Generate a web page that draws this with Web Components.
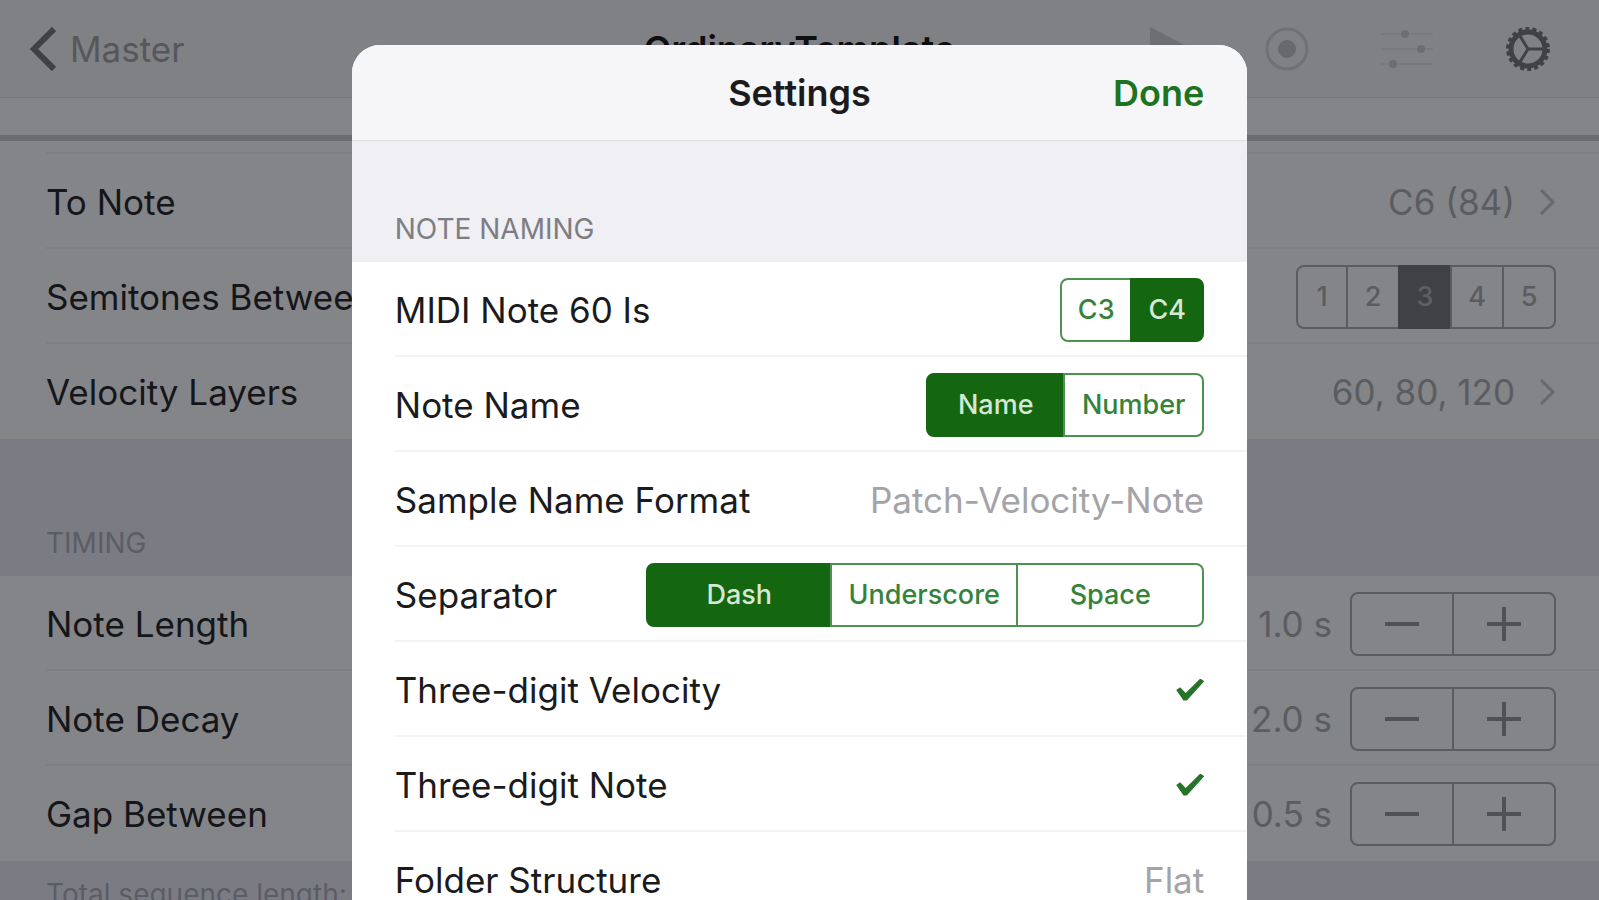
<!DOCTYPE html>
<html lang="en">
<head>
<meta charset="utf-8">
<meta name="viewport" content="width=device-width, initial-scale=1">
<title>Settings</title>
<style>
  :root {
    --tint: #146610;
    --cell: #ffffff;
    --group: #efeff4;
    --line: #f3f3f5;
    --text: #1b1b1d;
    --detail: #a3a3a8;
    --heading: #7d7d83;
    --gutter: 43px;
  }
  body {
    margin: 0;
    height: 100vh;
    overflow: hidden;
    background: #7b7b84;
    font-family: Inter, "Liberation Sans", sans-serif;
    font-size: 35px;
    line-height: 44px;
  }
  .dimmed {
    --tint: #404145;
    --cell: #848588;
    --group: #7b7b84;
    --line: #7e7f82;
    --text: #15161a;
    --detail: #5b5c60;
    --heading: #5c5d63;
    --gutter: 46px;
    --border: #5b5c60;
    --on-tint: #5f6064;
  }
</style>
</head>
<body>
  <main class="dimmed">
    <nav-header>OrdinaryTemplate</nav-header>
    <setting-group continued>
      <setting-row label="To Note" detail="C6 (84)" link></setting-row>
      <setting-row label="Semitones Between"><segmented-control name="semitones" options="1,2,3,4,5" value="3" size="52"></segmented-control></setting-row>
      <setting-row label="Velocity Layers" detail="60, 80, 120" link></setting-row>
    </setting-group>
    <setting-group heading="TIMING" footer="Total sequence length:">
      <setting-row label="Note Length"><value-stepper value="1.0" label="Note Length"></value-stepper></setting-row>
      <setting-row label="Note Decay"><value-stepper value="2.0" label="Note Decay"></value-stepper></setting-row>
      <setting-row label="Gap Between"><value-stepper value="0.5" label="Gap Between"></value-stepper></setting-row>
    </setting-group>
  </main>
  <settings-sheet heading="Settings">
    <setting-group heading="NOTE NAMING">
      <setting-row label="MIDI Note 60 Is"><segmented-control name="middle" options="C3,C4" value="C4" size="72"></segmented-control></setting-row>
      <setting-row label="Note Name"><segmented-control name="note" options="Name,Number" value="Name" size="139"></segmented-control></setting-row>
      <setting-row label="Sample Name Format" detail="Patch-Velocity-Note"></setting-row>
      <setting-row label="Separator"><segmented-control name="separator" options="Dash,Underscore,Space" value="Dash" size="186"></segmented-control></setting-row>
      <setting-row label="Three-digit Velocity" check></setting-row>
      <setting-row label="Three-digit Note" check></setting-row>
      <setting-row label="Folder Structure" detail="Flat"></setting-row>
    </setting-group>
  </settings-sheet>

<script>
class NavHeader extends HTMLElement {
  constructor() {
    super();
    this.attachShadow({ mode: "open" });
  }

  connectedCallback() {
    this.shadowRoot.innerHTML = `
      <style>
        :host {
          display: block;
          background: var(--cell);
          border-bottom: 6px solid #6b6c70;
          padding-bottom: 37px;
        }
        header {
          box-sizing: border-box;
          height: 98px;
          display: grid;
          grid-template-columns: 1fr auto 1fr;
          align-items: center;
          padding: 0 48px 0 30px;
          background: #808184;
          border-bottom: 1px solid #77787b;
        }
        header {
          padding-right: 48px;
          padding-left: 48px;
        }
        h1 {
          margin: 0;
          font-size: 36px;
          font-weight: 600;
          line-height: 44px;
          color: #0e0f12;
        }
        a {
          display: flex;
          align-items: center;
          gap: 14px;
          margin-left: -18px;
          color: #56575b;
          text-decoration: none;
        }
        nav {
          display: flex;
          justify-content: flex-end;
          gap: 72px;
        }
        button {
          display: flex;
          border: 0;
          padding: 0;
          background: none;
        }
        svg {
          display: block;
        }
      </style>
      <header>
        <a href="#master">
          <svg width="26" height="44" viewBox="0 0 26 44" fill="none" stroke="#404145" stroke-width="6"><path d="M24 2 4 22 24 42"/></svg>
          Master
        </a>
        <h1><slot></slot></h1>
        <nav>
          <button aria-label="Play">
            <svg width="44" height="44" viewBox="0 0 44 44"><path fill="#6d6e72" d="M1 0 43 22 1 44Z"/></svg>
          </button>
          <button aria-label="Record">
            <svg width="44" height="44" viewBox="0 0 44 44"><circle cx="22" cy="22" r="20" fill="none" stroke="#707175" stroke-width="3"/><circle cx="22" cy="22" r="9" fill="#68696d"/></svg>
          </button>
          <button aria-label="Mixer">
            <svg width="52" height="44" viewBox="0 0 52 44"><path stroke="#797a7d" stroke-width="2" d="M0 7H52M0 22H52M0 37H52"/><g fill="#6d6e72"><circle cx="24" cy="7" r="4"/><circle cx="40" cy="22" r="4"/><circle cx="12" cy="37" r="4"/></g></svg>
          </button>
          <button aria-label="Settings">
            <svg width="46" height="44" viewBox="-23 -22 46 44" fill="none" stroke="#404145">
              <circle r="20" stroke-width="4" stroke-dasharray="4 3"/>
              <circle r="17" stroke-width="5"/>
              <path stroke-width="3" d="M0 0H15M0 0-8-13M0 0-8 13"/>
            </svg>
          </button>
        </nav>
      </header>
    `;
  }
}

class SettingGroup extends HTMLElement {
  constructor() {
    super();
    this.attachShadow({ mode: "open" });
  }

  connectedCallback() {
    const heading = this.getAttribute("heading");
    const footer = this.getAttribute("footer");
    this.shadowRoot.innerHTML = `
      <style>
        :host {
          display: block;
          background: var(--group);
        }
        h2, p {
          margin: 0;
          font-size: 28px;
          font-weight: 400;
          line-height: 32px;
          color: var(--heading);
          padding: 0 var(--gutter);
        }
        h2 {
          padding-top: var(--group-gap, 88px);
          padding-bottom: 17px;
        }
        p {
          padding-top: 17px;
        }
        .rows {
          background: var(--cell);
        }
        /* the row above is scrolled under the header, only its rule shows */
        :host([continued]) .rows::before {
          content: "";
          display: block;
          height: 11px;
          margin-left: var(--gutter);
          border-bottom: 2px solid var(--line);
        }
      </style>
      ${heading ? `<h2>${heading}</h2>` : ""}
      <div class="rows"><slot></slot></div>
      ${footer ? `<p>${footer}</p>` : ""}
    `;
  }
}

class SettingRow extends HTMLElement {
  constructor() {
    super();
    this.attachShadow({ mode: "open" });
  }

  connectedCallback() {
    this.shadowRoot.innerHTML = `
      <style>
        :host {
          display: block;
          padding-left: var(--gutter);
        }
        .row {
          box-sizing: border-box;
          min-height: 95px;
          display: flex;
          align-items: center;
          justify-content: space-between;
          padding-top: 2px;
          padding-right: 43px;
          border-bottom: 2px solid var(--line);
          color: var(--text);
          white-space: nowrap;
        }
        :host(:last-child) .row {
          border-bottom-color: transparent;
        }
        .detail, a {
          display: flex;
          align-items: center;
          gap: 24px;
          color: var(--detail);
          text-decoration: none;
        }
        input {
          appearance: none;
          width: 28px;
          height: 22px;
          margin: 0;
        }
        input:checked {
          background: #247528;
          clip-path: polygon(0 52%, 14% 40%, 34% 66%, 86% 0, 100% 12%, 38% 100%, 26% 100%);
        }
      </style>
      ${this.content()}
    `;
  }

  content() {
    const label = this.getAttribute("label");
    const detail = this.getAttribute("detail");
    if (this.hasAttribute("check")) {
      return `<label class="row">${label}<input type="checkbox" checked></label>`;
    }
    if (this.hasAttribute("link")) {
      return `
        <div class="row">${label}
          <a href="#detail">${detail}
            <svg width="17" height="28" viewBox="0 0 17 28" fill="none" stroke="#68696d" stroke-width="3"><path d="M2 2 14 14 2 26"/></svg>
          </a>
        </div>`;
    }
    return `<div class="row">${label}<div class="detail">${detail || "<slot></slot>"}</div></div>`;
  }
}

class SegmentedControl extends HTMLElement {
  constructor() {
    super();
    this.attachShadow({ mode: "open" });
  }

  connectedCallback() {
    const name = this.getAttribute("name");
    const value = this.getAttribute("value");
    const options = this.getAttribute("options").split(",");
    this.shadowRoot.innerHTML = `
      <style>
        :host {
          display: block;
        }
        div {
          display: grid;
          grid-auto-flow: column;
          grid-auto-columns: ${this.getAttribute("size")}px;
          padding-right: 2px;
          margin-right: -2px;
        }
        label {
          display: grid;
          height: 64px;
          box-sizing: border-box;
          border: 2px solid var(--border, #4f9150);
          font-size: 27px;
          font-weight: 500;
          line-height: 32px;
          color: var(--border, #35833a);
        }
        label + label {
          margin-left: -2px;
        }
        label:first-child {
          border-radius: 8px 0 0 8px;
        }
        label:last-child {
          border-radius: 0 8px 8px 0;
        }
        label:has(input:checked) {
          background: var(--tint);
          border-color: var(--tint);
          color: var(--on-tint, #d6e8d5);
        }
        input, span {
          grid-area: 1 / 1;
          place-self: center;
        }
        input {
          appearance: none;
          place-self: stretch;
          margin: 0;
        }
      </style>
      <div role="radiogroup" aria-label="${name}">
        ${options
          .map((option) => `<label><input type="radio" name="${name}" ${option === value ? "checked" : ""}><span>${option}</span></label>`)
          .join("")}
      </div>
    `;
  }
}

class ValueStepper extends HTMLElement {
  constructor() {
    super();
    this.attachShadow({ mode: "open" });
  }

  connectedCallback() {
    const label = this.getAttribute("label");
    this.value = Number(this.getAttribute("value"));
    this.shadowRoot.innerHTML = `
      <style>
        :host {
          display: flex;
          align-items: center;
          gap: 18px;
        }
        div {
          display: flex;
          border: 2px solid var(--border);
          border-radius: 8px;
        }
        button {
          display: grid;
          place-items: center;
          width: 100px;
          height: 60px;
          padding: 0;
          border: 0;
          background: none;
        }
        button + button {
          width: 102px;
          border-left: 2px solid var(--border);
        }
        svg {
          stroke: #505155;
          stroke-width: 4;
        }
      </style>
      <output>${this.value.toFixed(1)} s</output>
      <div>
        <button aria-label="Decrease ${label}"><svg width="34" height="34"><path d="M0 17H34"/></svg></button>
        <button aria-label="Increase ${label}"><svg width="34" height="34"><path d="M0 17H34M17 0V34"/></svg></button>
      </div>
    `;
    const [minus, plus] = this.shadowRoot.querySelectorAll("button");
    minus.addEventListener("click", () => this.step(-0.5));
    plus.addEventListener("click", () => this.step(0.5));
  }

  step(amount) {
    this.value = Math.max(0, this.value + amount);
    this.shadowRoot.querySelector("output").textContent = `${this.value.toFixed(1)} s`;
  }
}

class SettingsSheet extends HTMLElement {
  constructor() {
    super();
    this.attachShadow({ mode: "open" });
  }

  connectedCallback() {
    this.shadowRoot.innerHTML = `
      <style>
        :host {
          --group-gap: 72px;
          position: fixed;
          top: 45px;
          bottom: 0;
          left: 22%;
          right: 22%;
          overflow: hidden;
          border-radius: 28px 28px 0 0;
          background: var(--cell);
        }
        header {
          display: grid;
          grid-template-columns: 1fr auto 1fr;
          align-items: center;
          height: 95px;
          padding: 0 43px;
          background: #f6f6f8;
          border-bottom: 1px solid #dedee2;
        }
        h1, button {
          margin: 0;
          font: 600 36px/44px Inter, "Liberation Sans", sans-serif;
        }
        h1 {
          grid-column: 2;
          color: #1b1b1d;
        }
        button {
          justify-self: end;
          border: 0;
          padding: 0;
          background: none;
          color: #1d7420;
        }
      </style>
      <header>
        <h1>${this.getAttribute("heading")}</h1>
        <button>Done</button>
      </header>
      <slot></slot>
    `;
  }
}

customElements.define("nav-header", NavHeader);
customElements.define("setting-group", SettingGroup);
customElements.define("setting-row", SettingRow);
customElements.define("segmented-control", SegmentedControl);
customElements.define("value-stepper", ValueStepper);
customElements.define("settings-sheet", SettingsSheet);
</script>
</body>
</html>
